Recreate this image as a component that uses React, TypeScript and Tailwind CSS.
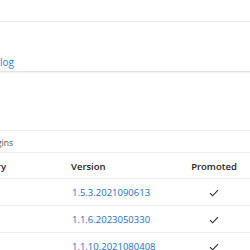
const rows = [
  { version: "1.5.3.2021090613", promoted: true },
  { version: "1.1.6.2023050330", promoted: true },
  { version: "1.1.10.2021080408", promoted: true },
];

function Check() {
  return (
    <svg width="10" height="8" viewBox="0 0 10 8" fill="none">
      <path d="M1 4.2 L3.6 6.8 L9 1.2" stroke="#2b2b2b" strokeWidth="1.1" />
    </svg>
  );
}

export default function App() {
  return (
    <div
      className="w-[250px] h-[250px] overflow-hidden bg-white text-[#242424]"
      style={{ fontFamily: '"Open Sans", "Noto Sans", sans-serif' }}
    >
      {/* top bar */}
      <div className="h-[22px] border-b border-[#ececec]" />

      {/* catalog section */}
      <div className="h-[50px] flex items-end pb-[4px] border-b border-[#e3e3e3] shadow-[0_1px_1px_rgba(0,0,0,0.04)]">
        <div className="w-[14px] flex justify-end whitespace-nowrap">
          <a href="#" className="text-[10px] leading-none text-[#2d7fd0]">
            Catalog
          </a>
        </div>
      </div>

      <div className="h-[58px]" />

      {/* breadcrumb */}
      <div className="h-[23px] flex items-center pt-[3px] border-y border-[#ededed]">
        <div className="w-[13px] flex justify-end whitespace-nowrap">
          <span className="text-[8.5px] text-[#505050]">Plugins</span>
        </div>
      </div>

      {/* table */}
      <div className="grid grid-cols-[71px_105px_74px] h-[26px] items-center pt-[3px] border-b border-[#efefef] text-[9.5px] font-semibold">
        <div className="flex">
          <div className="w-[6px] flex justify-end whitespace-nowrap">Category</div>
        </div>
        <div>Version</div>
        <div className="text-center pl-[2px]">Promoted</div>
      </div>
      {rows.map((r) => (
        <div
          key={r.version}
          className="grid grid-cols-[71px_105px_74px] h-[27px] items-center pt-[2px] border-b border-[#efefef] text-[9.5px]"
        >
          <div />
          <a href="#" className="pl-px text-[#1b6ec2]">
            {r.version}
          </a>
          <div className="flex justify-center pl-px">{r.promoted && <Check />}</div>
        </div>
      ))}
    </div>
  );
}
